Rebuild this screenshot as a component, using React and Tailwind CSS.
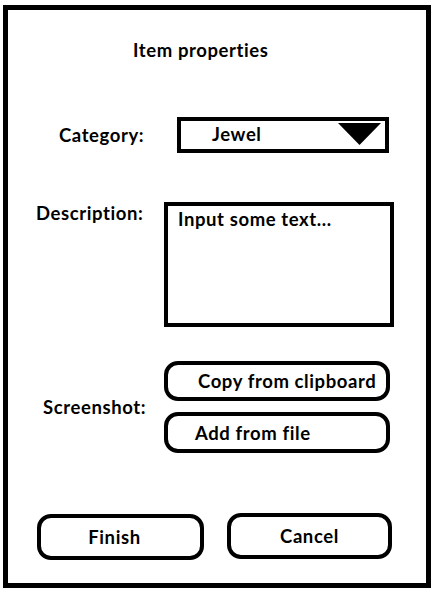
export default function App() {
  const font = { fontFamily: "Lato, 'Open Sans', sans-serif" };

  return (
    <div className="w-[438px] h-[595px] bg-white pt-[5px] pl-[3px]" style={font}>
      <div className="w-[428px] h-[583px] border-[5px] border-black flex flex-col text-black font-bold text-[18.5px] leading-[22px] tracking-[0.6px]">

        {/* Title */}
        <div className="mt-[29px] pl-[125px]">Item properties</div>

        {/* Category */}
        <div className="mt-[56px] pl-[51px] flex items-center">
          <span className="w-[118px]">Category:</span>
          <div className="w-[212px] h-[36px] border-[4px] border-black flex items-center">
            <span className="ml-[31px] -mt-[2px]">Jewel</span>
            <svg width="45" height="22" viewBox="0 0 45 22" className="ml-auto mr-[3px] self-start mt-[2px]">
              <polygon points="1,0 44,0 22.5,22" fill="black" />
            </svg>
          </div>
        </div>

        {/* Description */}
        <div className="mt-[49px] pl-[28px] flex items-start">
          <span className="w-[128px]">Description:</span>
          <div className="w-[230px] h-[125px] border-[4px] border-black pl-[10px] pt-[2px]">
            Input some text...
          </div>
        </div>

        {/* Screenshot */}
        <div className="mt-[34px] pl-[35px] flex items-center">
          <span className="w-[121px]">Screenshot:</span>
          <div className="flex flex-col gap-[11px]">
            <button className="w-[226px] h-[40px] border-[4px] border-black rounded-[14px] flex items-center pl-[30px] font-bold">
              Copy from clipboard
            </button>
            <button className="w-[226px] h-[41px] border-[4px] border-black rounded-[14px] flex items-center pl-[27px] font-bold">
              Add from file
            </button>
          </div>
        </div>

        {/* Actions */}
        <div className="mt-auto mb-[23px] pl-[29px] flex items-end gap-[23px]">
          <button className="w-[167px] h-[46px] border-[4px] border-black rounded-[14px] flex items-center justify-center pr-[12px] font-bold">
            Finish
          </button>
          <button className="w-[165px] h-[46px] border-[4px] border-black rounded-[14px] flex items-center justify-center font-bold mb-[1px]">
            Cancel
          </button>
        </div>
      </div>
    </div>
  );
}
